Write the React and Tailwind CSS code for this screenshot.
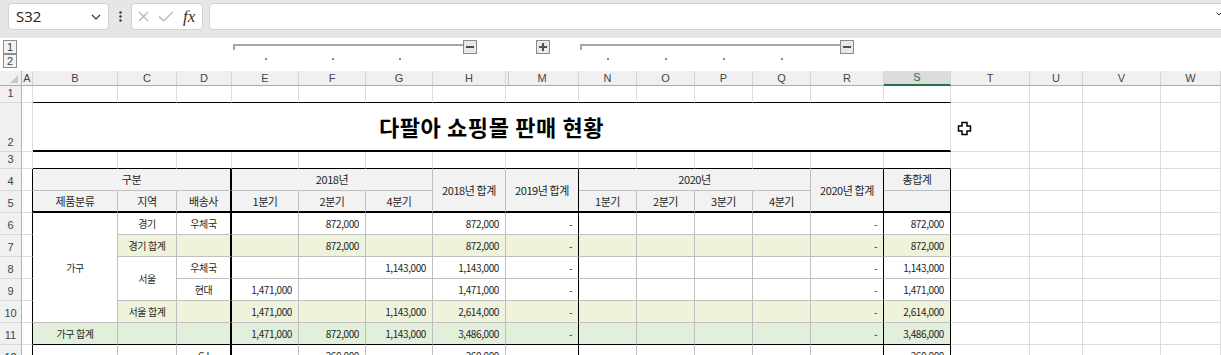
import clsx from "clsx";

// column template: row header, A, B, C, D, E, F, G, H, M, N, O, P, Q, R, S, T, U, V, W
const COLS =
  "grid-cols-[22px_11px_85px_59px_55px_67px_67px_67px_73px_73px_58px_58px_58px_58px_73px_67px_79px_53px_78px_1fr]";
const LETTERS = ["A", "B", "C", "D", "E", "F", "G", "H", "M", "N", "O", "P", "Q", "R", "S", "T", "U", "V", "W"];
const TABLE_COLS = ["B", "C", "D", "E", "F", "G", "H", "M", "N", "O", "P", "Q", "R", "S"];

// right-hand borders that differ from the grey inner lines
const RIGHT = {
  D: "border-r-2 border-r-black",
  M: "border-r-black",
  R: "border-r-black",
  S: "border-r-black",
};

const HDR = "bg-[#f2f2f2] text-[11px] tracking-[-0.3px]";
const SUB = "bg-[#eff3dc]";
const TOT = "bg-[#e2efda]";
const B5 = "border-b-2 border-b-black";
const B11 = "border-b-black";

const rows = [
  {
    n: 4,
    cells: [
      { c: "D", t: "구분", x: clsx(HDR, "col-span-3") },
      { c: "G", t: "2018년", x: clsx(HDR, "col-span-3") },
      { c: "H", t: "2018년 합계", x: clsx(HDR, "row-span-2", B5) },
      { c: "M", t: "2019년 합계", x: clsx(HDR, "row-span-2", B5) },
      { c: "Q", t: "2020년", x: clsx(HDR, "col-span-4") },
      { c: "R", t: "2020년 합계", x: clsx(HDR, "row-span-2", B5) },
      { c: "S", t: "총합계", x: HDR },
    ],
  },
  {
    n: 5,
    cells: [
      ["B", "제품분류"],
      ["C", "지역"],
      ["D", "배송사"],
      ["E", "1분기"],
      ["F", "2분기"],
      ["G", "4분기"],
      ["N", "1분기"],
      ["O", "2분기"],
      ["P", "3분기"],
      ["Q", "4분기"],
      ["S", ""],
    ].map(([c, t]) => ({ c, t, x: clsx(HDR, B5) })),
  },
  {
    n: 6,
    cells: [
      { c: "B", t: "가구", x: "row-span-5" },
      { c: "C", t: "경기" },
      { c: "D", t: "우체국" },
      ...nums({ F: "872,000", H: "872,000", S: "872,000" }),
    ],
  },
  {
    n: 7,
    cells: [
      { c: "C", t: "경기 합계", x: SUB },
      { c: "D", t: "", x: SUB },
      ...nums({ F: "872,000", H: "872,000", S: "872,000" }, SUB),
    ],
  },
  {
    n: 8,
    cells: [
      { c: "C", t: "서울", x: "row-span-2" },
      { c: "D", t: "우체국" },
      ...nums({ G: "1,143,000", H: "1,143,000", S: "1,143,000" }),
    ],
  },
  {
    n: 9,
    cells: [{ c: "D", t: "현대" }, ...nums({ E: "1,471,000", H: "1,471,000", S: "1,471,000" })],
  },
  {
    n: 10,
    cells: [
      { c: "C", t: "서울 합계", x: SUB },
      { c: "D", t: "", x: SUB },
      ...nums({ E: "1,471,000", G: "1,143,000", H: "2,614,000", S: "2,614,000" }, SUB),
    ],
  },
  {
    n: 11,
    cells: [
      { c: "B", t: "가구 합계", x: clsx(TOT, B11) },
      { c: "C", t: "", x: clsx(TOT, B11) },
      { c: "D", t: "", x: clsx(TOT, B11) },
      ...nums(
        { E: "1,471,000", F: "872,000", G: "1,143,000", H: "3,486,000", S: "3,486,000" },
        clsx(TOT, B11)
      ),
    ],
  },
  {
    n: 12,
    cells: [
      { c: "B", t: "" },
      { c: "C", t: "" },
      { c: "D", t: "CJ" },
      ...nums({ F: "260,000", H: "260,000", S: "260,000" }),
    ],
  },
];

function nums(vals, x) {
  return ["E", "F", "G", "H", "M", "N", "O", "P", "Q", "R", "S"].map((c) => ({
    c,
    t: c === "M" || c === "R" ? "-" : vals[c] || "",
    x,
    num: true,
  }));
}

function Blank({ className }) {
  return <div className={clsx("border-r border-b border-[#dcdcdc]", className)} />;
}

function RowHead({ n }) {
  return (
    <div className="flex items-end justify-center pb-[3px] bg-[#f0f0f0] border-r border-b border-r-[#b4b4b4] border-b-[#d8d8d8] text-[11px] leading-none text-[#444] font-['Liberation_Sans',sans-serif]">
      {n}
    </div>
  );
}

function Cell({ c, t, x, num }) {
  return (
    <div
      className={clsx(
        "flex items-center overflow-hidden whitespace-nowrap border-r border-b border-[#bfbfbf] text-[10px] tracking-[-0.4px] text-[#1f1f1f]",
        num ? "justify-end pr-[6px]" : "justify-center",
        RIGHT[c],
        x
      )}>
      {t}
    </div>
  );
}

function OutlineBtn({ plus }) {
  return (
    <div className="w-[14px] h-[14px] shrink-0 flex items-center justify-center border border-[#8a8a8a] bg-[#e8e8e8]">
      <svg width="8" height="8" viewBox="0 0 8 8">
        <path d={plus ? "M0 4h8M4 0v8" : "M0 4h8"} stroke="#505050" strokeWidth="2" />
      </svg>
    </div>
  );
}

function Bar({ className }) {
  return (
    <div className={clsx("flex items-start pt-[2px]", className)}>
      <div className="flex-1 flex mt-[4px]">
        <div className="w-[2px] h-[6px] bg-[#a6a6a6]" />
        <div className="flex-1 h-[2px] bg-[#a6a6a6]" />
      </div>
      <OutlineBtn />
    </div>
  );
}

function Dot() {
  return (
    <div className="pt-[4px] flex justify-center">
      <div className="w-[2px] h-[2px] bg-[#8a8a8a]" />
    </div>
  );
}

function LevelBtn({ children }) {
  return (
    <div className="w-[14px] h-[14px] flex items-center justify-center border border-[#8c8c8c] bg-[#f3f3f3] text-[11px] leading-none text-[#444] font-['Liberation_Sans',sans-serif]">
      {children}
    </div>
  );
}

export default function App() {
  return (
    <div className="relative w-[1221px] h-[355px] overflow-hidden bg-white font-['Noto_Sans_CJK_KR',sans-serif]">
      {/* formula bar */}
      <div className="h-[38px] bg-[#e6e6e6] flex items-start pt-[3px] pl-[8px]">
        <div className="w-[101px] h-[27px] shrink-0 flex items-center justify-between pl-[7px] pr-[7px] bg-white border border-[#d2d2d2] rounded-[4px]">
          <span className="text-[15px] text-[#222] font-['Open_Sans',sans-serif]">S32</span>
          <svg width="10" height="6" viewBox="0 0 10 6">
            <path d="M1 1l4 4 4-4" fill="none" stroke="#333" strokeWidth="1.2" />
          </svg>
        </div>
        <div className="w-[22px] h-[27px] shrink-0 flex items-center justify-center">
          <svg width="3" height="11" viewBox="0 0 3 11">
            <circle cx="1.5" cy="1.5" r="1.2" fill="#333" />
            <circle cx="1.5" cy="5.5" r="1.2" fill="#333" />
            <circle cx="1.5" cy="9.5" r="1.2" fill="#333" />
          </svg>
        </div>
        <div className="w-[72px] h-[27px] shrink-0 flex items-center pl-[6px] gap-[9px] bg-white border border-[#d2d2d2] rounded-[4px]">
          <svg width="11" height="11" viewBox="0 0 11 11">
            <path d="M1 1l9 9M10 1l-9 9" stroke="#b4b4b4" strokeWidth="1.2" />
          </svg>
          <svg width="16" height="11" viewBox="0 0 16 11">
            <path d="M1 5.5l4.5 4.5L15 1" fill="none" stroke="#b4b4b4" strokeWidth="1.2" />
          </svg>
          <span className="italic text-[17px] leading-none text-[#333] font-['Liberation_Serif',serif]">fx</span>
        </div>
        <div className="ml-[6px] w-[1016px] h-[27px] shrink-0 flex items-start justify-end pt-[8px] pr-[2px] bg-white border border-[#d2d2d2] rounded-[4px]">
          <svg width="6" height="4" viewBox="0 0 6 4">
            <path d="M0.5 0.5l2.5 2.5 2.5-2.5" fill="none" stroke="#333" strokeWidth="1" />
          </svg>
        </div>
      </div>

      {/* outline area */}
      <div className={clsx("grid h-[33px] grid-rows-[16px_17px]", COLS)}>
        <div className="row-span-2 pl-[3px] pt-[2px] flex flex-col">
          <LevelBtn>1</LevelBtn>
          <LevelBtn>2</LevelBtn>
        </div>
        <div className="col-span-4" />
        <Bar className="col-span-4 pl-[1px] pr-[29px]" />
        <div className="flex justify-center pt-[2px]">
          <OutlineBtn plus />
        </div>
        <Bar className="col-span-5 pl-[1px] pr-[30px]" />
        <div className="col-span-5" />
        <div className="col-span-4" />
        <Dot />
        <Dot />
        <Dot />
        <div className="col-span-2" />
        <Dot />
        <Dot />
        <Dot />
        <Dot />
        <div className="col-span-6" />
      </div>

      {/* column headers */}
      <div className={clsx("grid h-[15px]", COLS)}>
        <div className="flex items-end justify-end pr-[3px] pb-[2px] bg-[#f0f0f0] border-r border-b border-r-[#b4b4b4] border-b-[#ababab]">
          <svg width="8" height="8" viewBox="0 0 8 8">
            <path d="M8 0V8H0Z" fill="#c8c8c8" />
          </svg>
        </div>
        {LETTERS.map((l) => (
          <div
            key={l}
            className={clsx(
              "flex items-center justify-center border-r text-[11px] leading-none font-['Liberation_Sans',sans-serif] border-r-[#d4d4d4]",
              l === "S"
                ? "bg-[#dcdcdc] border-b-2 border-b-[#217346] text-[#217346]"
                : "bg-[#f0f0f0] border-b border-b-[#ababab] text-[#444]",
              l === "M" && "shadow-[inset_2px_0_0_#f0f0f0,inset_3px_0_0_#c4c4c4]"
            )}>
            {l}
          </div>
        ))}
      </div>

      {/* sheet */}
      <div className={clsx("grid grid-rows-[17px_49px_17px_repeat(9,22px)]", COLS)}>
        <RowHead n={1} />
        <Blank />
        {TABLE_COLS.map((c) => (
          <Blank key={c} className="border-b-black" />
        ))}
        <Blank />
        <Blank />
        <Blank />
        <Blank />

        <RowHead n={2} />
        <Blank />
        <div className="col-span-14 flex items-center justify-center border-r border-r-[#dcdcdc] border-b-2 border-b-black text-[22px] font-bold text-black tracking-[0.6px]">
          다팔아 쇼핑몰 판매 현황
        </div>
        <Blank />
        <Blank />
        <Blank />
        <Blank />

        <RowHead n={3} />
        <Blank />
        {TABLE_COLS.map((c) => (
          <Blank key={c} className="border-b-black" />
        ))}
        <Blank />
        <Blank />
        <Blank />
        <Blank />

        {rows.map((r) => [
          <RowHead key={`h${r.n}`} n={r.n} />,
          <Blank key={`a${r.n}`} className="border-r-black" />,
          ...r.cells.map((cell, i) => <Cell key={`${r.n}-${i}`} {...cell} />),
          <Blank key={`t${r.n}`} />,
          <Blank key={`u${r.n}`} />,
          <Blank key={`v${r.n}`} />,
          <Blank key={`w${r.n}`} />,
        ])}
      </div>

      {/* mouse pointer */}
      <svg className="absolute left-[957px] top-[121px]" width="15" height="15" viewBox="0 0 15 15">
        <path
          d="M5 1.5h5v3.5h3.5v5H10v3.5H5V10H1.5V5H5Z"
          fill="white"
          stroke="black"
          strokeWidth="1.5"
        />
      </svg>
    </div>
  );
}
